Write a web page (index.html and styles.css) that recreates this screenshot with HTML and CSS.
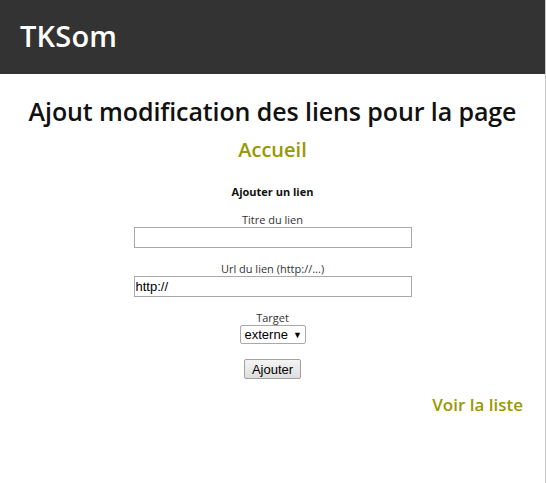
FILE: index.html
```html
<!DOCTYPE html>
<html lang="fr">
<head>
<meta charset="utf-8">
<title>TKSom</title>
<link rel="stylesheet" href="styles.css">
</head>
<body>
<div class="page">
  <header class="topbar"><span class="brand">TKSom</span></header>
  <main class="content">
    <h1 class="title">Ajout modification des liens pour la page</h1>
    <h2 class="subtitle">Accueil</h2>
    <form class="form">
      <div class="form-head">Ajouter un lien</div>
      <label class="field">
        <span class="label">Titre du lien</span>
        <input class="input" type="text">
      </label>
      <label class="field">
        <span class="label">Url du lien (http://...)</span>
        <input class="input" type="text" value="http://">
      </label>
      <label class="field">
        <span class="label">Target</span>
        <span class="select">externe <span class="arrow">▼</span></span>
      </label>
      <div class="actions"><button class="btn" type="button">Ajouter</button></div>
    </form>
    <div class="more"><a class="more-link" href="#">Voir la liste</a></div>
  </main>
</div>
</body>
</html>
```
FILE: styles.css
```css
html, body { margin: 0; padding: 0; background: #fff; }
body { font-family: "Open Sans", "DejaVu Sans", sans-serif; }
.page {
  width: 545px;
  height: 483px;
  border-right: 1px solid #c8c8c8;
  box-sizing: content-box;
}
.topbar {
  background: #333333;
  height: 74px;
  display: flex;
  align-items: center;
  padding-left: 20px;
}
.brand {
  color: #fff;
  font-size: 29px;
  font-weight: 600;
  letter-spacing: 0.2px;
  margin-top: -3px;
}
.content { padding: 0 22px; }
.title {
  margin: 20px 0 0;
  text-align: center;
  font-size: 25px;
  font-weight: 600;
  color: #111;
  line-height: 34px;
  letter-spacing: -0.1px;
}
.subtitle {
  margin: 8px 0 0;
  text-align: center;
  font-size: 20px;
  font-weight: 600;
  color: #999900;
  line-height: 28px;
}
.form {
  display: flex;
  flex-direction: column;
  align-items: center;
  margin-top: 20px;
}
.form-head {
  font-size: 11px;
  font-weight: 700;
  color: #111;
  line-height: 16px;
  margin-bottom: 13px;
}
.field {
  display: flex;
  flex-direction: column;
  align-items: center;
  margin-bottom: 14px;
}
.label {
  font-size: 11px;
  color: #333;
  line-height: 14px;
}
.input {
  width: 278px;
  height: 21px;
  box-sizing: border-box;
  border: 1px solid #a9a9a9;
  padding: 0 1px;
  font-family: "Liberation Sans", Arial, sans-serif;
  font-size: 13px;
  color: #000;
  margin: 0;
}
.select {
  display: inline-flex;
  align-items: center;
  height: 19px;
  box-sizing: border-box;
  border: 1px solid #a9a9a9;
  border-radius: 2px;
  padding: 0 4px;
  font-family: "Liberation Sans", Arial, sans-serif;
  font-size: 13px;
  color: #000;
  width: 66px;
}
.arrow { font-size: 9px; margin-left: 5px; }
.actions { margin-top: 1px; display: flex; }
.btn {
  font-family: "Liberation Sans", Arial, sans-serif;
  font-size: 13px;
  height: 20px;
  padding: 0 7px;
  border: 1px solid #a0a0a0;
  border-radius: 2px;
  background: linear-gradient(#f4f4f4, #dedede);
  color: #000;
}
.more {
  text-align: right;
  margin-top: 14px;
}
.more-link {
  font-size: 17px;
  font-weight: 600;
  color: #999900;
  text-decoration: none;
}
```
